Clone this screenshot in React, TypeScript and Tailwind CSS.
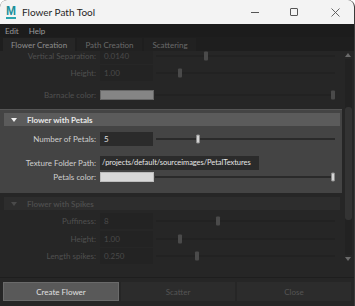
import React from 'react';

const font = { fontFamily: 'Lato, "Liberation Sans", sans-serif' };

function Handle({ left, bright }: { left: number; bright?: boolean }) {
  return (
    <div
      className={`absolute top-1/2 -translate-y-1/2 w-[4px] h-[9px] rounded-[1px] ${bright ? 'bg-[#d4d4d4] border border-[#8a8a8a]' : 'bg-[#4a4a4a]'}`}
      style={{ left }}
    />
  );
}

function Slider({ pos, bright }: { pos: number; bright?: boolean }) {
  return (
    <div className="relative flex-1 h-full ml-[3px] mr-[7px]">
      <div className={`absolute left-0 right-0 top-1/2 h-[2px] -translate-y-1/2 ${bright ? 'bg-[#2a2a2a]' : 'bg-[#222]'}`} />
      <Handle left={pos} bright={bright} />
    </div>
  );
}

function Label({ text, bright }: { text: string; bright?: boolean }) {
  return (
    <div className={`w-[100px] pr-[4px] text-right text-[8px] whitespace-nowrap ${bright ? 'text-[#cfcfcf]' : 'text-[#505050]'}`}>{text}</div>
  );
}

function Row({
  label,
  value,
  pos,
  bright,
  h = 'h-[15px]',
}: {
  label: string;
  value: string;
  pos: number;
  bright?: boolean;
  h?: string;
}) {
  return (
    <div className={`flex items-center ${h}`}>
      <Label text={label} bright={bright} />
      <div className={`w-[53px] h-full flex items-center pl-[4px] text-[8px] ${bright ? 'bg-[#2b2b2b] text-[#e0e0e0]' : 'bg-[#232323] text-[#4a4a4a]'}`}>
        {value}
      </div>
      <Slider pos={pos} bright={bright} />
    </div>
  );
}

function ColorRow({ label, color, bright }: { label: string; color: string; bright?: boolean }) {
  return (
    <div className="flex items-center h-[10px]">
      <Label text={label} bright={bright} />
      <div className={`w-[54px] h-full border ${bright ? 'border-[#bdbdbd]' : 'border-[#666]'}`} style={{ backgroundColor: color }} />
      <div className="relative flex-1 h-full ml-[1px] mr-[7px]">
        <div className={`absolute left-0 right-0 top-1/2 h-[2px] -translate-y-1/2 ${bright ? 'bg-[#2a2a2a]' : 'bg-[#222]'}`} />
        <div
          className={`absolute right-0 top-1/2 -translate-y-1/2 w-[4px] h-[9px] rounded-[1px] ${bright ? 'bg-[#d4d4d4] border border-[#8a8a8a]' : 'bg-[#4a4a4a]'}`}
        />
      </div>
    </div>
  );
}

function SectionHeader({ title, bright }: { title: string; bright?: boolean }) {
  return (
    <div className={`flex items-center h-[13px] ml-[4px] mr-[2px] ${bright ? 'bg-[#5b5b5b]' : 'bg-[#2d2d2d]'}`}>
      <svg width="6" height="4" viewBox="0 0 6 4" className="ml-[7px]">
        <path d="M0 0 L6 0 L3 4 Z" fill={bright ? '#f0f0f0' : '#4a4a4a'} />
      </svg>
      <span className={`ml-[10px] text-[8px] font-bold ${bright ? 'text-[#e8e8e8]' : 'text-[#4c4c4c]'}`}>{title}</span>
    </div>
  );
}

export default function App() {
  return (
    <div className="w-[355px] h-[306px] bg-[#262626] flex flex-col overflow-hidden rounded-t-[7px] border-r border-[#3a3a3a]" style={font}>
      {/* Title bar */}
      <div className="h-[24px] bg-[#f3f3f3] flex items-center shrink-0">
        <div className="ml-[5px] w-[12px] h-[14px] flex flex-col items-center">
          <span className="text-[12px] leading-[12px] font-bold text-[#1a8f9a]" style={{ fontFamily: '"Liberation Sans", sans-serif' }}>M</span>
          <div className="w-[10px] h-[2px] bg-[#2aa4ad]" />
        </div>
        <span className="ml-[5px] text-[10px] text-[#1f1f1f]">Flower Path Tool</span>
        <div className="ml-auto flex items-center">
          <div className="w-[8px] h-[1px] bg-[#555] mr-[31px]" />
          <div className="w-[8px] h-[8px] border border-[#555] rounded-[1px] mr-[33px]" />
          <svg width="9" height="9" viewBox="0 0 9 9" className="mr-[14px]">
            <path d="M0.5 0.5 L8.5 8.5 M8.5 0.5 L0.5 8.5" stroke="#555" strokeWidth="0.9" />
          </svg>
        </div>
      </div>

      {/* Menu bar */}
      <div className="h-[13px] bg-[#1c1c1c] flex items-center gap-[10px] pl-[5px] shrink-0 text-[8px] text-[#9a9a9a]">
        <span>Edit</span>
        <span>Help</span>
      </div>

      {/* Tabs */}
      <div className="h-[14px] bg-[#1e1e1e] flex items-end pl-[3px] gap-[2px] shrink-0 text-[8px]">
        <div className="h-[13px] w-[72px] bg-[#262626] flex items-center justify-center text-[#8e8e8e]">Flower Creation</div>
        <div className="h-[13px] w-[65px] bg-[#212121] flex items-center justify-center text-[#6a6a6a]">Path Creation</div>
        <div className="h-[13px] w-[52px] bg-[#212121] flex items-center justify-center text-[#6a6a6a]">Scattering</div>
      </div>

      {/* Scroll area */}
      <div className="flex h-[227px] shrink-0 overflow-hidden border-b border-[#1e1e1e]">
        <div className="flex-1 flex flex-col overflow-hidden">
          <div className="-mt-[3px] flex flex-col">
            <Row label="Vertical Separation:" value="0.0140" pos={48} h="h-[16px]" />
            <div className="h-[1px]" />
            <Row label="Height:" value="1.00" pos={22} h="h-[16px]" />
            <div className="h-[9px]" />
            <ColorRow label="Barnacle color:" color="#858585" />
            <div className="h-[9px]" />
          </div>

          {/* Bright section */}
          <div className="bg-[#444444] pt-[3px] pb-[11px] border-t border-[#555]">
            <SectionHeader title="Flower with Petals" bright />
            <div className="h-[6px]" />
            <Row label="Number of Petals:" value="5" pos={40} bright h="h-[14px]" />
            <div className="h-[10px]" />
            <div className="flex items-center h-[14px]">
              <Label text="Texture Folder Path:" bright />
              <div className="w-[159px] h-full flex items-center pl-[2px] text-[7.5px] tracking-[-0.05px] bg-[#2b2b2b] text-[#e6e6e6] whitespace-nowrap">
                /projects/default/sourceimages/PetalTextures
              </div>
            </div>
            <div className="h-[2px]" />
            <ColorRow label="Petals color:" color="#d9d9d9" bright />
          </div>

          {/* Dimmed section */}
          <div className="pt-[4px]">
            <SectionHeader title="Flower with Spikes" />
            <div className="h-[3px]" />
            <Row label="Puffiness:" value="8" pos={60} h="h-[16px]" />
            <div className="h-[2px]" />
            <Row label="Height:" value="1.00" pos={22} h="h-[16px]" />
            <div className="h-[1px]" />
            <Row label="Length spikes:" value="0.250" pos={39} h="h-[16px]" />
          </div>
        </div>

        {/* Scrollbar */}
        <div className="w-[12px] flex flex-col items-center pt-[2px] pb-[16px]">
          <svg width="6" height="4" viewBox="0 0 6 4">
            <path d="M3 0 L6 4 L0 4 Z" fill="#6a6a6a" />
          </svg>
          <div className="flex-1 w-[7px] mt-[2px] mb-[2px] bg-[#222] flex flex-col">
            <div className="h-[48px]" />
            <div className="h-[113px] bg-[#333] rounded-[3px]" />
          </div>
          <svg width="6" height="4" viewBox="0 0 6 4">
            <path d="M0 0 L6 0 L3 4 Z" fill="#6a6a6a" />
          </svg>
        </div>
      </div>

      {/* Buttons */}
      <div className="flex gap-[2px] px-[3px] pt-[4px] text-[8px]">
        <div className="flex-1 h-[19px] bg-[#595959] border border-[#6a6a6a] flex items-center justify-center text-[#e0e0e0]">Create Flower</div>
        <div className="flex-1 h-[19px] bg-[#2c2c2c] flex items-center justify-center text-[#555]">Scatter</div>
        <div className="flex-1 h-[19px] bg-[#2c2c2c] flex items-center justify-center text-[#555]">Close</div>
      </div>
    </div>
  );
}
